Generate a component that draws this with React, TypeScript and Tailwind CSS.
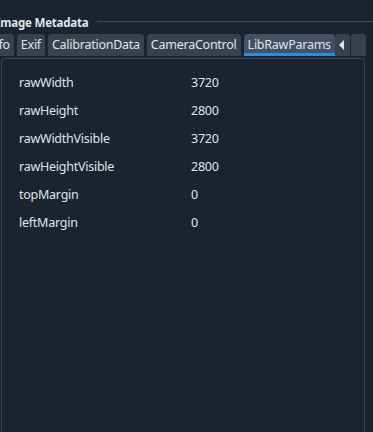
const tabs = ["Info", "Exif", "CalibrationData", "CameraControl", "LibRawParams"];

const rows: [string, string][] = [
  ["rawWidth", "3720"],
  ["rawHeight", "2800"],
  ["rawWidthVisible", "3720"],
  ["rawHeightVisible", "2800"],
  ["topMargin", "0"],
  ["leftMargin", "0"],
];

export default function App() {
  return (
    <div
      className="w-[373px] h-[432px] overflow-hidden bg-[#1b2330] text-[#dfe4ea] text-[12.5px] tracking-[-0.25px]"
      style={{ fontFamily: '"Noto Sans", "Open Sans", sans-serif' }}
    >
      {/* Section header */}
      <div className="flex items-center h-[20px] mt-[13px] ml-[-4px]">
        <span className="font-bold text-[11.5px] tracking-[-0.2px] whitespace-nowrap leading-none">
          Image Metadata
        </span>
        <div className="flex-1 h-px bg-[#3d4959] ml-[8px] mt-[-3px]" />
      </div>

      {/* Tab bar */}
      <div className="flex items-end gap-[3px] h-[22px] mt-[1px] ml-[-17px]">
        {tabs.map((t) => {
          const active = t === "LibRawParams";
          return (
            <div
              key={t}
              className={`relative h-[22px] px-[4px] rounded-t-[4px] flex items-center whitespace-nowrap ${
                active ? "bg-[#465163]" : "bg-[#38424f]"
              }`}
            >
              {t}
              {active && (
                <div className="absolute left-0 right-0 bottom-0 h-[3px] bg-[#2a8ee0]" />
              )}
            </div>
          );
        })}
        <div className="h-[22px] w-[15px] ml-[-3px] rounded-t-[4px] bg-[#38424f] flex items-center justify-center">
          <svg width="6" height="10" viewBox="0 0 6 10">
            <path d="M5 0 L0 5 L5 10 Z" fill="#dfe4ea" />
          </svg>
        </div>
        <div className="h-[22px] w-[15px] ml-[-2px] rounded-t-[4px] bg-[#38424f]" />
      </div>

      {/* Panel */}
      <div className="ml-[1px] w-[364px] h-[380px] mt-[2px] border border-[#3a4454] rounded-t-[4px] pt-[10px]">
        {rows.map(([k, v]) => (
          <div key={k} className="flex items-center h-[28px]">
            <span className="w-[189px] pl-[17px]">{k}</span>
            <span>{v}</span>
          </div>
        ))}
      </div>
    </div>
  );
}
